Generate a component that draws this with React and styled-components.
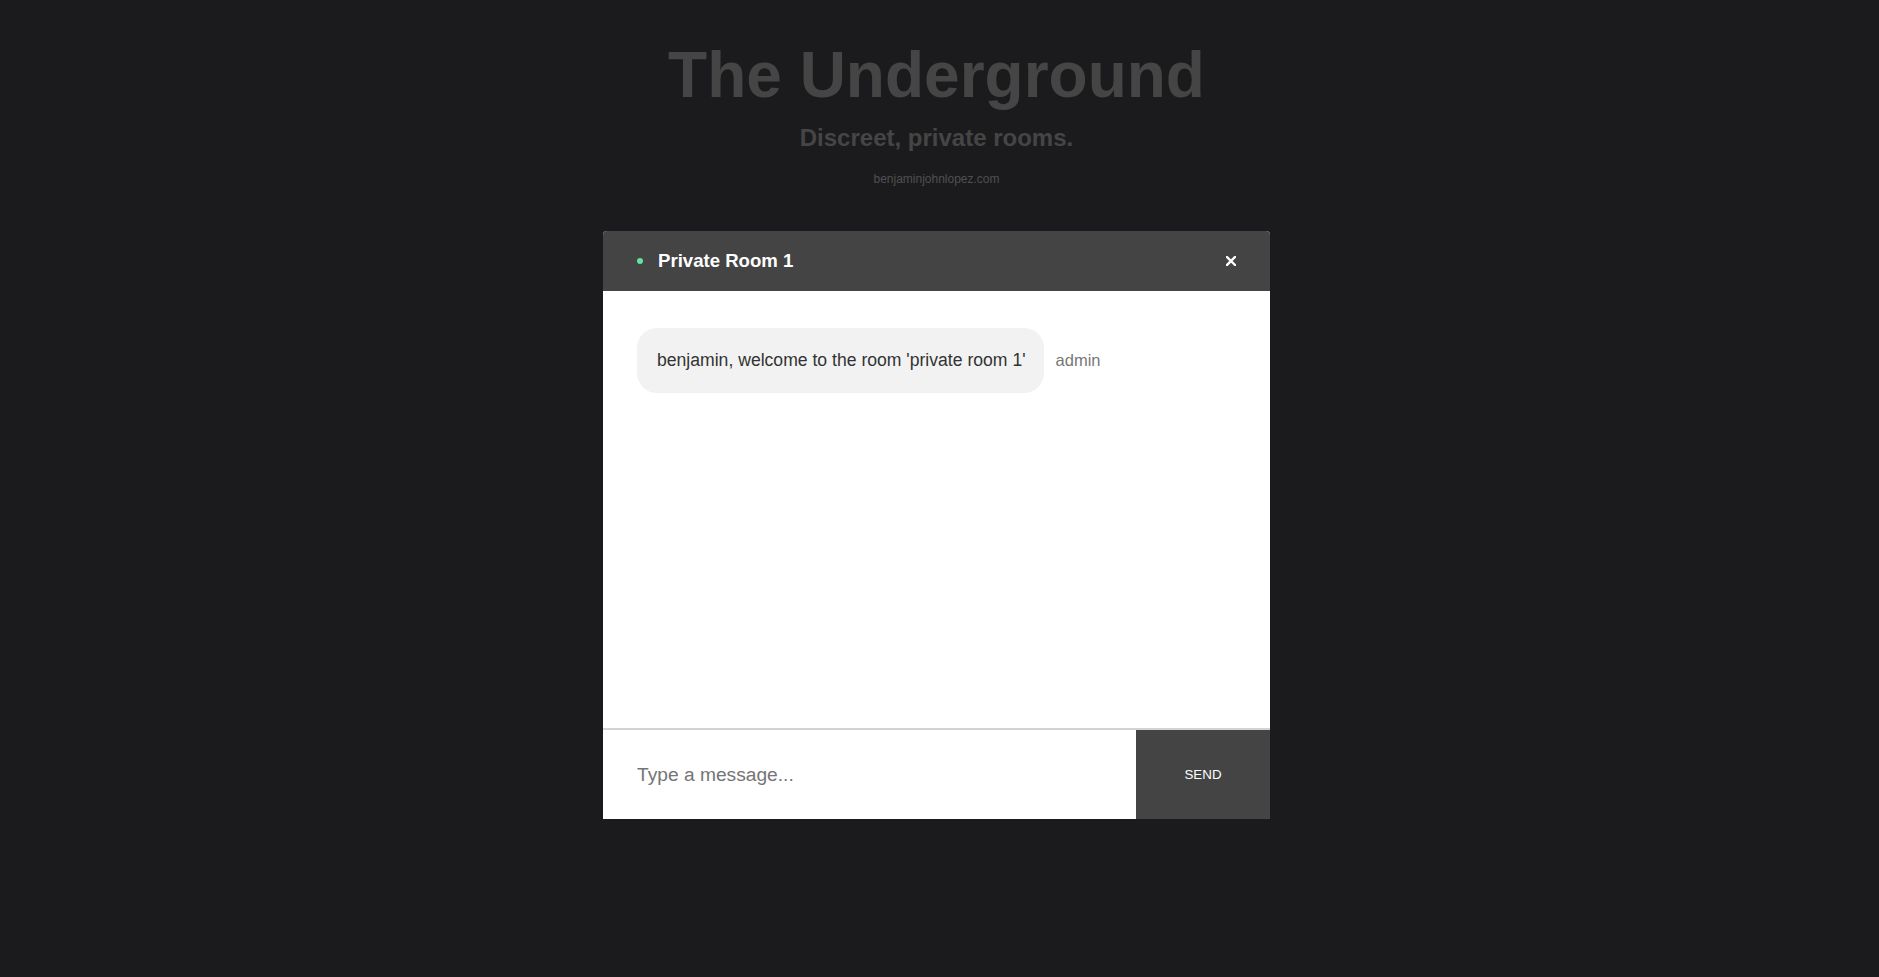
import React from 'react';
import styled, { createGlobalStyle } from 'styled-components';

const GlobalStyle = createGlobalStyle`
    html, body {
        margin: 0;
        padding: 0;
        background: #1b1b1d;
        font-family: "Liberation Sans", Arial, sans-serif;
    }
`;

const Page = styled.div`
    min-height: 977px;
    display: flex;
    flex-direction: column;
    align-items: center;
    padding: 38px 6px 0 0;
    box-sizing: border-box;
`;

const Title = styled.h1`
    margin: 0;
    font-size: 64px;
    font-weight: bold;
    color: #454545;
`;

const Subtitle = styled.h2`
    margin: 12px 0 0;
    font-size: 24px;
    font-weight: bold;
    color: #454545;
`;

const SiteLink = styled.a`
    margin-top: 20px;
    font-size: 12px;
    color: #4f4f53;
    text-decoration: none;
`;

const ChatBox = styled.div`
    margin-top: 45px;
    width: 667px;
    display: flex;
    flex-direction: column;
    background: #fff;
    border-radius: 4px 4px 0 0;
    overflow: hidden;
`;

const ChatHeader = styled.div`
    height: 60px;
    display: flex;
    align-items: center;
    padding: 0 34px;
    background: #444;
    color: #fff;
`;

const StatusDot = styled.span`
    width: 6px;
    height: 6px;
    border-radius: 50%;
    background: #5ee3a2;
    margin-right: 15px;
`;

const RoomName = styled.div`
    flex: 1;
    font-size: 18.6px;
    font-weight: bold;
`;

const CloseButton = styled.button`
    background: none;
    border: none;
    padding: 0;
    display: flex;
    cursor: pointer;
`;

const Messages = styled.div`
    height: 437px;
    padding: 37px 34px;
    box-sizing: border-box;
    display: flex;
    flex-direction: column;
    align-items: flex-start;
`;

const MessageRow = styled.div`
    display: flex;
    align-items: center;
`;

const Bubble = styled.div`
    background: #f2f2f2;
    color: #333;
    font-size: 17.6px;
    padding: 22px 18px 22px 20px;
    border-radius: 20px;
`;

const Author = styled.span`
    margin-left: 12px;
    font-size: 16.5px;
    color: #777;
`;

const Composer = styled.form`
    display: flex;
    height: 91px;
    border-top: 2px solid #d3d3d3;
    box-sizing: border-box;
`;

const MessageInput = styled.input`
    flex: 1;
    border: none;
    outline: none;
    padding: 0 34px;
    font-family: "Liberation Sans", Arial, sans-serif;
    font-size: 19.2px;
    color: #333;

    &::placeholder {
        color: #757575;
    }
`;

const SendButton = styled.button`
    width: 134px;
    border: none;
    background: #444;
    color: #fff;
    font-family: "Liberation Sans", Arial, sans-serif;
    font-size: 13.33px;
    cursor: pointer;
`;

export default function App() {
    return (
        <>
            <GlobalStyle />
            <Page>
                <Title>The Underground</Title>
                <Subtitle>Discreet, private rooms.</Subtitle>
                <SiteLink href="#">benjaminjohnlopez.com</SiteLink>
                <ChatBox>
                    <ChatHeader>
                        <StatusDot />
                        <RoomName>Private Room 1</RoomName>
                        <CloseButton type="button" aria-label="close">
                            <svg width="10" height="10" viewBox="0 0 10 10">
                                <path d="M1 1 L9 9 M9 1 L1 9" stroke="#fff" strokeWidth="2.4" strokeLinecap="square" />
                            </svg>
                        </CloseButton>
                    </ChatHeader>
                    <Messages>
                        <MessageRow>
                            <Bubble>benjamin, welcome to the room 'private room 1'</Bubble>
                            <Author>admin</Author>
                        </MessageRow>
                    </Messages>
                    <Composer onSubmit={e => e.preventDefault()}>
                        <MessageInput placeholder="Type a message..." />
                        <SendButton type="submit">SEND</SendButton>
                    </Composer>
                </ChatBox>
            </Page>
        </>
    );
}
